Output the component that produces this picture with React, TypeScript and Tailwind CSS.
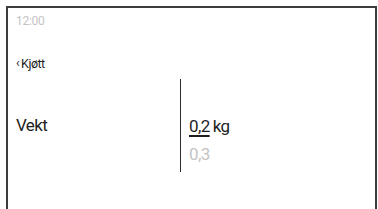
import React from 'react';

const font = { fontFamily: 'Roboto, "Liberation Sans", sans-serif' };

const App: React.FC = () => {
  return (
    <div className="w-[378px] h-[209px] overflow-hidden bg-white" style={font}>
      <div className="ml-[6px] mt-[6px] mr-[1px] h-[220px] border-l-2 border-t-2 border-r-2 border-[#3c3c3c] pl-[8px]">
        {/* status bar */}
        <div className="pt-[6px] text-[12px] leading-[14px] tracking-[-0.3px] text-[#c4c4c4]">12:00</div>

        {/* back link */}
        <div className="mt-[29px] flex items-center gap-[2px] text-[12.5px] leading-[13px] tracking-[-0.5px] text-[#1e1e1e]">
          <span className="text-[12px]">‹</span>
          <span>Kjøtt</span>
        </div>

        {/* weight picker */}
        <div className="mt-[9px] flex">
          <div className="w-[164px] flex items-center text-[17px] tracking-[-0.6px] text-[#1e1e1e]">Vekt</div>
          <div className="w-px h-[93px] bg-[#2c2c2c]" />
          <div className="pl-[8px] pt-[33px] flex flex-col text-[17px] leading-[28px] tracking-[-0.6px]">
            <div className="text-[#1e1e1e]">
              <span className="underline decoration-[1.5px] underline-offset-[3px]">0,2</span>
              <span className="ml-[3px]">kg</span>
            </div>
            <div className="text-[#c4c4c4]">0,3</div>
          </div>
        </div>
      </div>
    </div>
  );
};

export default App;
